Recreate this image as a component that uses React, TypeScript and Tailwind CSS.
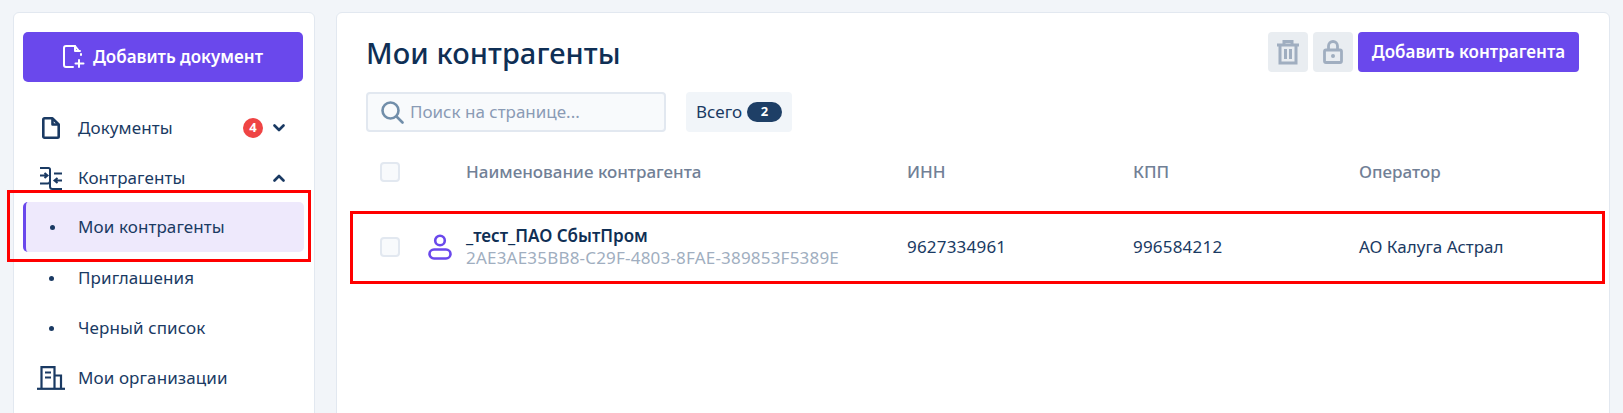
const FileIcon = () => (
  <svg width="18" height="22" viewBox="0 0 18 22" fill="none" stroke="#1a3a63" strokeWidth="2.6" strokeLinejoin="round">
    <path d="M2.5 1.3h8L16.7 7.5v12a1.2 1.2 0 0 1-1.2 1.2h-13a1.2 1.2 0 0 1-1.2-1.2v-17a1.2 1.2 0 0 1 1.2-1.2Z" />
    <path d="M10.5 1.3v6.2h6.2" />
  </svg>
);

const PartnersIcon = () => (
  <svg width="22" height="23" viewBox="0 0 22 23" fill="none" stroke="#1a3a63" strokeWidth="2">
    <path d="M0 1h8.5A1.5 1.5 0 0 1 10 2.5v17a2.5 2.5 0 0 0 2.5 2.5H22" />
    <path d="M14 6.5h8M0 16.5h7.5A2.5 2.5 0 0 0 10 14" />
    <path d="M0 8.5h7M4.5 6l3 2.5-3 2.5" />
    <path d="M22 13.5h-7M17.5 11l-3 2.5 3 2.5" />
  </svg>
);

const BuildingIcon = () => (
  <svg width="28" height="24" viewBox="0 0 28 24" fill="none" stroke="#1a3a63" strokeWidth="2.2">
    <path d="M0 22.8h28" />
    <path d="M4.5 23V1.2h13V23M17.5 9.5h6.5V23" />
    <path d="M8 6.5h6M8 11.5h6" />
  </svg>
);

const AddDocIcon = () => (
  <svg width="22" height="24" viewBox="0 0 22 24" fill="none" stroke="#ffffff" strokeWidth="2" strokeLinecap="round" strokeLinejoin="round">
    <path d="M10 22H3a2 2 0 0 1-2-2V3a2 2 0 0 1 2-2h9l4 5" />
    <path d="M12 1v5h5M18 9v1" />
    <path d="M16 15v7M12.5 18.5h8" />
  </svg>
);

const Chevron = ({ up }: { up?: boolean }) => (
  <svg width="12" height="8" viewBox="0 0 12 8" fill="none" stroke="#1a3a63" strokeWidth="2.6" strokeLinecap="round" strokeLinejoin="round">
    <path d={up ? 'M1.5 6.5 6 2l4.5 4.5' : 'M1.5 1.5 6 6l4.5-4.5'} />
  </svg>
);

const TrashIcon = () => (
  <svg width="24" height="26" viewBox="0 0 24 26" fill="none" stroke="#a0aec0" strokeWidth="3">
    <path d="M1 6h22M8 6V2.5h8V6M4 6v18h16V6M9.5 10v10M14.5 10v10" />
  </svg>
);

const LockIcon = () => (
  <svg width="20" height="24" viewBox="0 0 20 24" fill="none" stroke="#a0aec0" strokeWidth="2.8">
    <rect x="1.5" y="10" width="17" height="12.5" rx="1.5" />
    <path d="M5.5 10V6a4.5 4.5 0 0 1 9 0v4" />
    <circle cx="10" cy="16" r="2" fill="#a0aec0" stroke="none" />
  </svg>
);

const SearchIcon = () => (
  <svg width="24" height="24" viewBox="0 0 24 24" fill="none" stroke="#718eaa" strokeWidth="2.6" strokeLinecap="round">
    <circle cx="10.5" cy="10.5" r="8" />
    <path d="m17 17 5.5 5.5" />
  </svg>
);

const UserIcon = () => (
  <svg width="24" height="26" viewBox="0 0 24 26" fill="none" stroke="#6a48ec" strokeWidth="2.6">
    <circle cx="12" cy="6.5" r="4.8" />
    <rect x="1.5" y="15.5" width="21" height="9" rx="4.5" />
  </svg>
);

const Checkbox = () => (
  <span className="block w-5 h-5 rounded-[4px] border-2 border-[#e2e8f0] bg-[#f8fafc]" />
);

const NavRow = ({ icon, label, right }: { icon: React.ReactNode; label: string; right?: React.ReactNode }) => (
  <div className="h-[50px] flex items-center">
    <div className="w-[55px] flex justify-center pl-[1px]">{icon}</div>
    <span className="text-[17px] tracking-[0.1px] text-[#1a3a63]">{label}</span>
    {right && <div className="ml-auto flex items-center">{right}</div>}
  </div>
);

const Dot = () => <span className="block w-[5px] h-[5px] rounded-full bg-[#1a3a63]" />;

const Sidebar = () => (
  <aside className="w-[302px] h-[420px] shrink-0 bg-white border border-[#e2e8f0] rounded-[6px] pt-[19px] pl-[9px] pr-[10px]">
    <button className="w-[280px] h-[50px] rounded-[5px] bg-[#6a48ec] flex items-center justify-center gap-[8px] text-white text-[17px] font-semibold">
      <AddDocIcon />
      Добавить документ
    </button>
    <nav className="mt-[21px]">
      <NavRow
        icon={<FileIcon />}
        label="Документы"
        right={
          <>
            <span className="w-5 h-5 rounded-full bg-[#ef4444] text-white text-[13px] font-bold flex items-center justify-center">4</span>
            <span className="ml-[10px] mr-[19px] flex"><Chevron /></span>
          </>
        }
      />
      <NavRow icon={<PartnersIcon />} label="Контрагенты" right={<span className="mr-[19px] flex"><Chevron up /></span>} />
      <div className="h-[50px] -mt-[1px] rounded-[5px] border-l-[3px] border-[#6a48ec] bg-[#eee9fc] flex items-center">
        <div className="w-[52px] flex justify-center pl-[1px]"><Dot /></div>
        <span className="text-[17px] tracking-[0.1px] text-[#1a3a63]">Мои контрагенты</span>
      </div>
      <div className="h-[1px]" />
      <NavRow icon={<Dot />} label="Приглашения" />
      <NavRow icon={<Dot />} label="Черный список" />
      <NavRow icon={<BuildingIcon />} label="Мои организации" />
    </nav>
  </aside>
);

const gridCols = 'grid grid-cols-[36px_50px_441px_226px_226px_1fr] items-center';

const Main = () => (
  <main className="flex-1 h-[420px] bg-white border border-[#e2e8f0] rounded-[6px] pt-[19px] pl-[29px] pr-[30px]">
    <div className="flex items-start justify-between">
      <h1 className="text-[29px] leading-[42px] font-medium tracking-[0.1px] text-[#0f2f55]">Мои контрагенты</h1>
      <div className="flex gap-[5px]">
        <button className="w-10 h-10 rounded-[4px] bg-[#e9edf1] flex items-center justify-center"><TrashIcon /></button>
        <button className="w-10 h-10 rounded-[4px] bg-[#e9edf1] flex items-center justify-center"><LockIcon /></button>
        <button className="w-[221px] h-10 rounded-[4px] bg-[#6a48ec] text-white text-[17px] font-semibold">Добавить контрагента</button>
      </div>
    </div>
    <div className="mt-[18px] flex items-center gap-[20px]">
      <div className="w-[300px] h-10 rounded-[4px] border-2 border-[#e2e8f0] bg-[#f8fafc] flex items-center pl-[12px] gap-[6px]">
        <SearchIcon />
        <span className="text-[17px] text-[#8a9bb5]">Поиск на странице...</span>
      </div>
      <div className="h-10 w-[106px] rounded-[4px] bg-[#f1f5f9] flex items-center pl-[10px] gap-[5px]">
        <span className="text-[17px] text-[#1a3a63]">Всего</span>
        <span className="w-[35px] h-5 rounded-full bg-[#1e3f66] text-white text-[13px] font-bold flex items-center justify-center">2</span>
      </div>
    </div>
    <div className={`${gridCols} mt-[20px] h-[40px] pl-[14px] text-[17px] font-medium text-[#718096]`}>
      <Checkbox />
      <span />
      <span>Наименование контрагента</span>
      <span>ИНН</span>
      <span>КПП</span>
      <span>Оператор</span>
    </div>
    <div className={`${gridCols} mt-[25px] h-[60px] pl-[14px] text-[17px] text-[#1a3a63]`}>
      <Checkbox />
      <div className="pl-[12px]"><UserIcon /></div>
      <div className="flex flex-col">
        <span className="font-semibold text-[#0f2f55] leading-[22px]">_тест_ПАО СбытПром</span>
        <span className="text-[#a0aec0] leading-[22px] tracking-[0.2px]">2AE3AE35BB8-C29F-4803-8FAE-389853F5389E</span>
      </div>
      <span className="tracking-[0.2px]">9627334961</span>
      <span className="tracking-[0.2px]">996584212</span>
      <span>АО Калуга Астрал</span>
    </div>
  </main>
);

export default function App() {
  return (
    <div className="relative h-[413px] overflow-hidden bg-[#f2f5f9] flex gap-[21px] pt-[12px] pl-[13px] pr-[13px]" style={{ fontFamily: '"Noto Sans", sans-serif' }}>
      <Sidebar />
      <Main />
      {/* red annotation frames */}
      <div className="absolute left-[7px] top-[190px] w-[304px] h-[72px] border-[3px] border-[#ff0000]" />
      <div className="absolute left-[350px] top-[211px] w-[1255px] h-[73px] border-[3px] border-[#ff0000]" />
    </div>
  );
}
